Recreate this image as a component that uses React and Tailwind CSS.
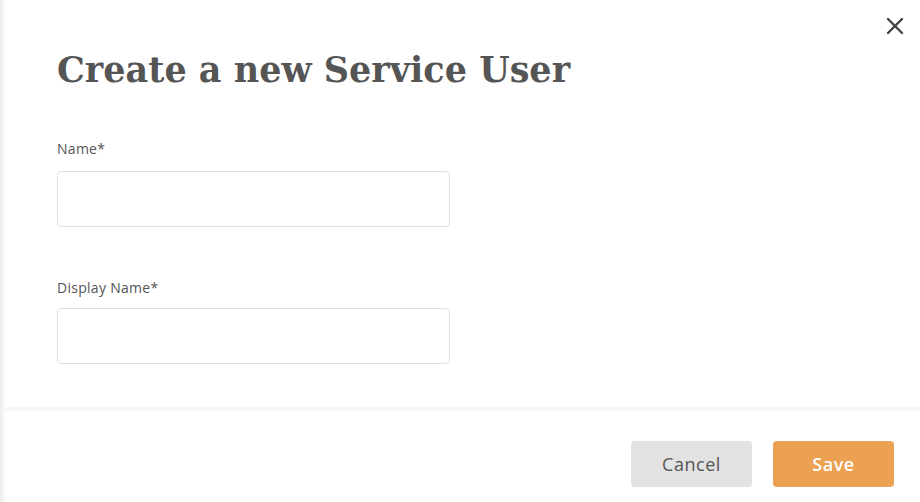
import { X } from "lucide-react";

export default function App() {
  return (
    <div className="flex h-[502px] w-[920px] bg-white overflow-hidden" style={{ fontFamily: "'Open Sans', 'Liberation Sans', sans-serif" }}>
      <div className="w-[6px] bg-gradient-to-r from-[#ececec] to-white" />
      <div className="relative flex flex-1 flex-col">
        <button className="absolute right-[11px] top-[12px] text-[#444]">
          <X className="w-[28px] h-[28px]" strokeWidth={2.1} />
        </button>

        <div className="h-[407px] pl-[51px] pt-[50px]">
          <h1
            className="text-[35px] font-bold leading-[40px] text-[#555]"
            style={{ fontFamily: "'DejaVu Serif', serif" }}
          >
            Create a new Service User
          </h1>

          <div className="mt-[50px]">
            <label className="block text-[14px] tracking-[0.02em] text-[#555] leading-[18px]">Name*</label>
            <input
              type="text"
              className="mt-[13px] block h-[56px] w-[393px] rounded-[4px] border border-[#e0e0e0] px-3 focus:outline-none"
            />
          </div>

          <div className="mt-[52px]">
            <label className="block text-[14px] tracking-[0.02em] text-[#555] leading-[18px]">Display Name*</label>
            <input
              type="text"
              className="mt-[11px] block h-[56px] w-[393px] rounded-[4px] border border-[#e0e0e0] px-3 focus:outline-none"
            />
          </div>
        </div>

        <div className="h-[4px] bg-[#f6f6f6]" />

        <div className="flex justify-end gap-[21px] pr-[26px] pt-[30px]">
          <button className="h-[46px] w-[121px] rounded-[4px] bg-[#e2e2e2] text-[18px] font-medium tracking-[0.03em] text-[#555]">
            Cancel
          </button>
          <button className="h-[46px] w-[121px] rounded-[4px] bg-[#eba052] text-[18px] font-semibold tracking-[0.03em] text-white">
            Save
          </button>
        </div>
      </div>
    </div>
  );
}
